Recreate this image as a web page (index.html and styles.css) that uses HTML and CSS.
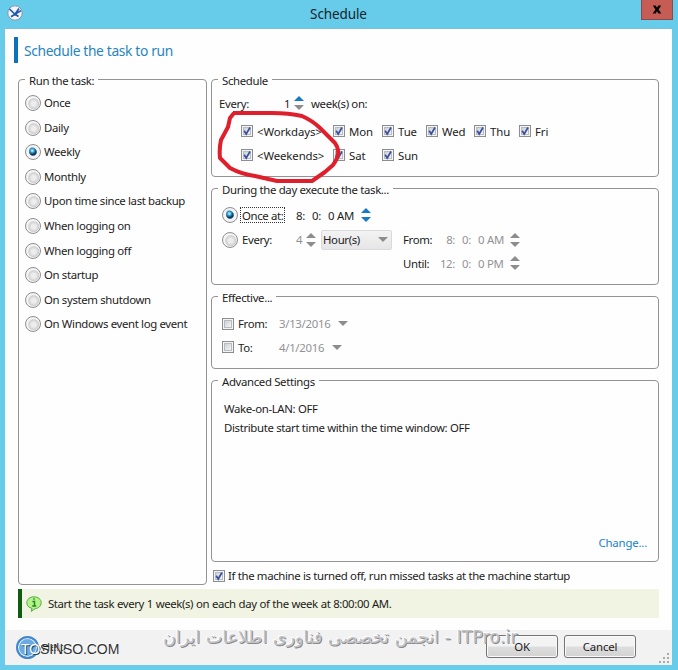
FILE: index.html
```html
<!DOCTYPE html>
<html lang="en">
<head>
<meta charset="utf-8">
<title>Schedule</title>
<link rel="stylesheet" href="styles.css">
</head>
<body>
<svg class="defs" width="0" height="0" aria-hidden="true">
  <defs>
    <linearGradient id="boxFill" x1="0" y1="0" x2="1" y2="1"><stop offset="0" stop-color="#c9cdd3"/><stop offset="1" stop-color="#f8f8f8"/></linearGradient>
    <symbol id="box" viewBox="0 0 12 12"><rect x=".5" y=".5" width="11" height="11" fill="#f4f4f4" stroke="#8c8f92"/><rect x="2.5" y="2.5" width="7" height="7" fill="url(#boxFill)" stroke="#b8bbc0"/></symbol>
    <symbol id="check" viewBox="0 0 12 12"><use href="#box"/><path d="M3.2 5.8 5.2 9 9 2.5" fill="none" stroke="#3c50a0" stroke-width="1.7"/></symbol>
    <symbol id="spin" viewBox="0 0 10 14"><path d="M0 5 5 0 10 5Z"/><path d="M0 9 5 14 10 9Z"/></symbol>
  </defs>
</svg>
<div class="window">
  <header class="titlebar">
    <svg class="app-icon" viewBox="0 0 16 16"><circle cx="8" cy="8" r="7.2" fill="#f3f5fa" stroke="#8797ad"/><path d="M2.500 4 8 9.300 14 5.600M4 11.800 8 9.300 12 3.500M8 9.300 11.500 11.500" fill="none" stroke="#2058b0" stroke-width="1.7"/></svg>
    <span class="title">Schedule</span>
    <button class="close"><svg viewBox="0 0 8 8"><path d="M.3.5h2.500L4 2.400 5.200.5h2.500L5.400 4l2.400 3.500H5.200L4 5.600 2.800 7.500H.2L2.600 4Z"/></svg></button>
  </header>
  <main class="body">
    <h1 class="heading">Schedule the task to run</h1>
    <div class="columns">
      <fieldset class="group tasks">
        <legend>Run the task:</legend>
        <label class="option"><i class="radio"></i><span>Once</span></label>
        <label class="option"><i class="radio"></i><span>Daily</span></label>
        <label class="option"><i class="radio on"></i><span>Weekly</span></label>
        <label class="option"><i class="radio"></i><span>Monthly</span></label>
        <label class="option"><i class="radio"></i><span>Upon time since last backup</span></label>
        <label class="option"><i class="radio"></i><span>When logging on</span></label>
        <label class="option"><i class="radio"></i><span>When logging off</span></label>
        <label class="option"><i class="radio"></i><span>On startup</span></label>
        <label class="option"><i class="radio"></i><span>On system shutdown</span></label>
        <label class="option"><i class="radio"></i><span>On Windows event log event</span></label>
      </fieldset>
      <div class="settings">
        <fieldset class="group schedule">
          <legend>Schedule</legend>
          <div class="row interval"><span class="caption">Every:</span><span class="count">1</span><svg class="spin half" viewBox="0 0 10 14"><path class="blue" d="M0 5 5 0 10 5Z"/><path d="M0 9 5 14 10 9Z"/></svg><span>week(s) on:</span></div>
          <div class="days">
            <label class="day"><svg class="box"><use href="#check"/></svg>&lt;Workdays&gt;</label>
            <label class="day"><svg class="box"><use href="#check"/></svg>Mon</label>
            <label class="day"><svg class="box"><use href="#check"/></svg>Tue</label>
            <label class="day"><svg class="box"><use href="#check"/></svg>Wed</label>
            <label class="day"><svg class="box"><use href="#check"/></svg>Thu</label>
            <label class="day"><svg class="box"><use href="#check"/></svg>Fri</label>
            <label class="day"><svg class="box"><use href="#check"/></svg>&lt;Weekends&gt;</label>
            <label class="day"><svg class="box"><use href="#check"/></svg>Sat</label>
            <label class="day"><svg class="box"><use href="#check"/></svg>Sun</label>
          </div>
          <svg class="marker" viewBox="0 0 126 84"><path d="M16 10 55 10Q72 10 85 13Q96 18 103 25L118 40Q122 46 121 51Q120 57 116 62L108 69 95 78 60 78 38 73Q24 71 13 65L3 55Q2 46 4 37L11 24 13 15 17 10"/></svg>
        </fieldset>
        <fieldset class="group daytime">
          <legend>During the day execute the task...</legend>
          <div class="row once"><i class="radio on"></i><span class="focus">Once at:</span><span class="time"><b>8:</b><b>0:</b><b>0</b><b>AM</b></span><svg class="spin blue"><use href="#spin"/></svg></div>
          <div class="row repeat"><i class="radio"></i><span class="every">Every:</span><span class="four">4</span><svg class="spin"><use href="#spin"/></svg><span class="select">Hour(s)<i class="arrow"></i></span><span class="bound">From:</span><span class="time off"><b>8:</b><b>0:</b><b>0</b><b>AM</b></span><svg class="spin"><use href="#spin"/></svg></div>
          <div class="row until"><span class="bound">Until:</span><span class="time off"><b>12:</b><b>0:</b><b>0</b><b>PM</b></span><svg class="spin"><use href="#spin"/></svg></div>
        </fieldset>
        <fieldset class="group effective">
          <legend>Effective...</legend>
          <div class="row"><svg class="box"><use href="#box"/></svg><span class="limit">From:</span><span class="date">3/13/2016</span><i class="arrow"></i></div>
          <div class="row"><svg class="box"><use href="#box"/></svg><span class="limit">To:</span><span class="date">4/1/2016</span><i class="arrow"></i></div>
        </fieldset>
        <fieldset class="group advanced">
          <legend>Advanced Settings</legend>
          <p>Wake-on-LAN: OFF</p>
          <p>Distribute start time within the time window: OFF</p>
          <a class="change">Change...</a>
        </fieldset>
        <label class="missed"><svg class="box"><use href="#check"/></svg><span>If the machine is turned off, run missed tasks at the machine startup</span></label>
      </div>
    </div>
    <div class="notice">
      <svg class="info" viewBox="0 0 16 16"><path d="M8 .8c4 0 7.200 2.500 7.200 5.900S12 12.600 9.200 12.600L5.200 15.300 6 12.300C3 11.900.8 9.600.8 6.700.8 3.300 4 .8 8 .8Z" fill="#b4f28a" stroke="#5aa84a"/><path d="M6.500 5.500h2v4M6.200 9.900h4M7.300 3h1.400" fill="none" stroke="#22861f" stroke-width="1.500"/></svg>
      <span>Start the task every 1 week(s) on each day of the week at 8:00:00 AM.</span>
    </div>
    <footer class="footer">
      <i class="help-icon"></i><span class="help">Help</span>
      <span class="brand"><em>TO</em>SINSO.COM</span>
      <button class="btn">OK</button>
      <button class="btn">Cancel</button>
      <span class="watermark" dir="rtl">ITPro.ir - انجمن تخصصی فناوری اطلاعات ایران</span>
      <svg class="grip" viewBox="0 0 10 10"><path d="M8 0h2v2H8zM4 4h2v2H4zM8 4h2v2H8zM0 8h2v2H0zM4 8h2v2H4zM8 8h2v2H8z"/></svg>
    </footer>
  </main>
</div>
</body>
</html>
```
FILE: styles.css
```css
* { box-sizing: border-box; }
body { margin: 0; font: 11.4px/15px "Noto Sans", "Open Sans", sans-serif; letter-spacing: -.35px; color: #1c1c1c; }
.defs { position: absolute; }
svg { display: block; flex: none; }
.window { width: 678px; height: 670px; background: #67cbea; padding: 0 6px 5px 5px; display: flex; flex-direction: column; }
.titlebar { height: 28px; display: flex; align-items: flex-start; justify-content: space-between; flex: none; }
.app-icon { width: 16px; height: 16px; margin: 5px 0 0 2px; }
.title { font-size: 13.5px; letter-spacing: -.1px; line-height: 18px; padding: 5px 0 0 13px; color: #15232a; }
.close { width: 32px; height: 20px; margin: 0 -1px 0 0; padding: 0; border: 1px solid #8b4b4d; border-top: 0; background: #c65d54; display: flex; align-items: center; justify-content: center; }
.close svg { width: 10px; height: 9px; }
.body { flex: 1; background: #fefefe; border-top: 1px solid #7cc0db; display: flex; flex-direction: column; min-height: 0; }
.heading { margin: 8px 0 0 9px; height: 26px; border-left: 4px solid #0b73b9; padding-left: 6px; font: 400 13.8px/27px "Noto Sans", sans-serif; color: #2685bd; flex: none; }
.columns { display: flex; gap: 4px; margin: 9px 13px 0; height: 513px; flex: none; }
.group { margin: 0; padding: 0; border: 1px solid #939396; border-radius: 4px; min-width: 0; position: relative; }
.group legend { margin-left: 6px; padding: 0 4px; height: 15px; line-height: 17px; white-space: nowrap; }
.tasks { width: 189px; flex: none; }
.option { display: flex; align-items: center; gap: 3px; height: 24.55px; padding-left: 6px; white-space: nowrap; }
.tasks legend + .option { margin-top: 4px; }
.option span, .missed span { position: relative; top: -.5px; }
.radio { width: 16px; height: 16px; flex: none; border-radius: 50%; border: 1px solid #8d8f92; background: radial-gradient(circle at 55% 55%, #ededed 0 20%, #cfcfcf 46%, #f4f4f4 54%); }
.radio.on { background: radial-gradient(circle at 45% 40%, #9fe7fa 0 6%, #258cbf 20%, transparent 34%), radial-gradient(circle at 50% 50%, #0c365f 0 32%, #f4f4f4 44%); }
.settings { flex: 1; display: flex; flex-direction: column; gap: 4px; min-width: 0; white-space: nowrap; }
.row { display: flex; align-items: center; height: 24px; }
.schedule { height: 105px; flex: none; }
.interval { margin-top: 4px; padding-left: 7px; }
.caption { width: 65px; }
.count { width: 10px; }
.spin { width: 10px; height: 14px; fill: #8d8d90; }
.blue { fill: #1879c5; }
.half { margin-right: 7px; }
.days { display: grid; grid-template-columns: 92px 49px 44px 48px 45px 60px; grid-auto-rows: 24px; padding: 4px 0 0 29px; letter-spacing: -.1px; }
.day { display: flex; align-items: center; gap: 4px; }
.day:nth-child(7) { grid-row: 2; }
.box { width: 12px; height: 12px; }
.marker { position: absolute; left: 5px; top: 16px; width: 126px; height: 84px; fill: none; stroke: #df1f2b; stroke-width: 4; stroke-linejoin: round; }
.daytime { height: 104px; flex: none; }
.once { margin-top: 7px; padding-left: 10px; }
.focus { margin-left: 2px; width: 45px; height: 16px; line-height: 15px; padding-left: 1px; border: 1px dotted #333; }
.time { display: grid; grid-template-columns: 16px 16px 9px 19px; margin-left: 11px; width: 65px; }
.time b { font-weight: 400; }
.off, .four, .date { color: #929295; }
.repeat { padding-left: 10px; height: 25px; }
.every { margin-left: 4px; width: 54px; }
.four { width: 10px; }
.select { margin: 0 11px 0 5px; width: 71px; height: 20px; padding: 0 3px 0 1px; display: flex; align-items: center; justify-content: space-between; border: 1px solid #dadadd; border-radius: 2px; background: linear-gradient(#f3f3f3, #e6e6e8); }
.arrow { width: 0; height: 0; border: 5px solid transparent; border-top-color: #8d8d90; border-bottom: 0; }
.bound { width: 32px; }
.off { margin-left: 11px; width: 64px; }
.off b:first-child { text-align: right; margin-right: 7px; margin-left: -8px; }
.until { padding-left: 191px; height: 22px; }
.effective { height: 80px; flex: none; }
.effective .row { padding-left: 10px; height: 23.500px; }
.effective legend + .row { margin-top: 8px; }
.limit { margin-left: 4px; width: 41px; }
.date { margin-right: 8px; letter-spacing: -.3px; }
.advanced { height: 189px; flex: none; }
.advanced p { margin: 0 0 0 12px; line-height: 19px; }
.advanced legend + p { margin-top: 11px; }
.change { display: block; margin: 98px 11px 0 0; text-align: right; color: #1982c8; letter-spacing: -.2px; }
.missed { display: flex; align-items: center; gap: 3px; height: 19px; padding-left: 2px; }
.notice { margin: 4px 13px 0; height: 29px; flex: none; display: flex; align-items: center; background: #f1f4e2; border-left: 4px solid #0d5c10; padding-left: 4px; gap: 6px; white-space: nowrap; }
.notice span { letter-spacing: -.55px; word-spacing: .3px; }
.notice span { letter-spacing: -.4px; }
.info { width: 16px; height: 16px; }
.footer { margin-top: 12px; flex: 1; background: #f2f2f3; position: relative; display: flex; align-items: center; justify-content: flex-end; gap: 6px; padding-right: 36px; }
.help-icon { position: absolute; left: 11px; top: 6px; width: 23px; height: 23px; border-radius: 50%; border: 2px solid #4286c9; background: #6aabe6; box-shadow: inset 0 0 0 1px #eef7ff; }
.help { position: absolute; left: 37px; top: 9px; }
.brand { position: absolute; left: 16px; top: 10px; font: 14px/18px "Liberation Sans", sans-serif; letter-spacing: -.1px; color: #333; text-shadow: -1px -1px #fff; }
.brand em { font-style: normal; color: #fff; text-shadow: 1px 1px #245; }
.btn { width: 72px; height: 23px; padding: 0 0 1px; border: 1px solid #737376; border-radius: 3px; background: linear-gradient(#f3f3f3 48%, #dedede 52%, #d2d2d2); box-shadow: inset 0 0 0 1px #fafafa; font: 11.4px/15px "Noto Sans", sans-serif; letter-spacing: -.2px; color: #1c1c1c; position: relative; top: -1px; }
.watermark { position: absolute; left: 158px; top: -4px; font: 17.5px/22px "DejaVu Sans", sans-serif; letter-spacing: 0; color: #c4c4c6; text-shadow: 1px 1px #8b8b8e, -1px -1px #fff; white-space: nowrap; }
.grip { position: absolute; right: 3px; bottom: 2px; width: 10px; height: 10px; fill: #aaa; }
```
